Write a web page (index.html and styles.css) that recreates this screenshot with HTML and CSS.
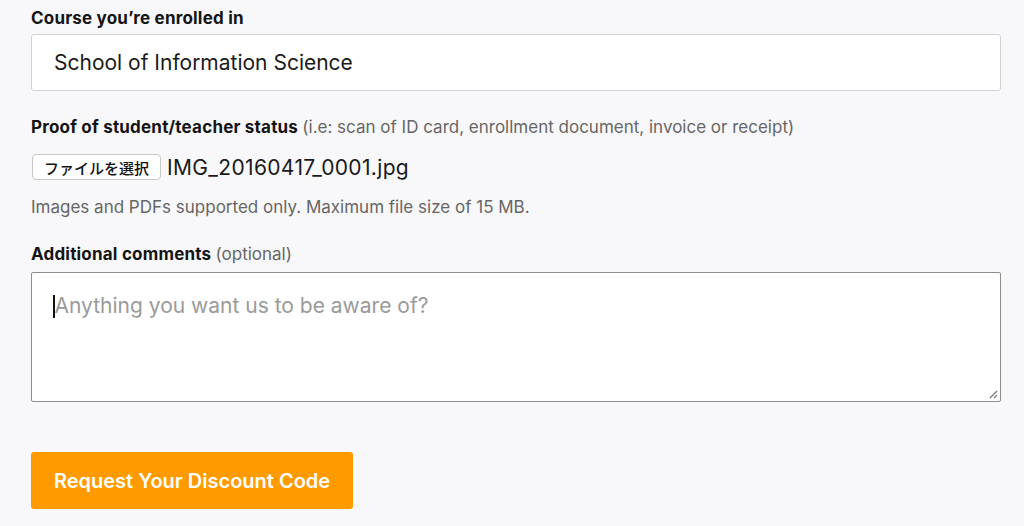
FILE: index.html
```html
<!DOCTYPE html>
<html>
<head>
<meta charset="utf-8">
<link rel="stylesheet" href="styles.css">
</head>
<body>
<form class="form">
  <div class="field">
    <label class="label">Course you’re enrolled in</label>
    <input class="input" type="text" value="School of Information Science">
  </div>
  <div class="field field-proof">
    <label class="label">Proof of student/teacher status <span class="muted">(i.e: scan of ID card, enrollment document, invoice or receipt)</span></label>
    <div class="file-row">
      <span class="file-btn">ファイルを選択</span>
      <span class="file-name">IMG_20160417_0001.jpg</span>
    </div>
    <p class="help">Images and PDFs supported only. Maximum file size of 15 MB.</p>
  </div>
  <div class="field">
    <label class="label">Additional comments <span class="muted">(optional)</span></label>
    <div class="textarea">
      <span class="caret"></span><span class="placeholder">Anything you want us to be aware of?</span>
      <svg class="grip" width="10" height="10" viewBox="0 0 10 10"><path d="M9 2 L2 9 M9 6 L6 9" stroke="#777" stroke-width="1.2" fill="none"/></svg>
    </div>
  </div>
  <div class="actions">
    <span class="submit">Request Your Discount Code</span>
  </div>
</form>
</body>
</html>
```
FILE: styles.css
```css
html, body {
  margin: 0;
  padding: 0;
  background: #f8f8fa;
  font-family: Inter, "Noto Sans", "Liberation Sans", sans-serif;
  color: #1a1a1a;
}
.form {
  width: 970px;
  padding: 8px 0 0 31px;
}
.field {
  display: flex;
  flex-direction: column;
}
.label {
  font-size: 17px;
  font-weight: 700;
  line-height: 20px;
  color: #141414;
  letter-spacing: 0.2px;
}
.muted {
  font-weight: 400;
  color: #666;
  letter-spacing: 0;
}
.input {
  margin-top: 6px;
  box-sizing: border-box;
  height: 57px;
  border: 1px solid #d2d2d4;
  border-radius: 3px;
  background: #fff;
  padding: 0 22px;
  font-family: inherit;
  font-size: 21px;
  color: #1a1a1a;
  outline: none;
}
.field-proof {
  margin-top: 26px;
}
.file-row {
  display: flex;
  align-items: center;
  margin-top: 17px;
  gap: 6px;
}
.file-btn {
  box-sizing: border-box;
  width: 129px;
  height: 26px;
  border: 1px solid #c8c8c8;
  border-radius: 4px;
  background: #fff;
  font-family: "Noto Sans CJK JP", sans-serif;
  font-size: 15px;
  font-weight: 500;
  display: flex;
  align-items: center;
  justify-content: center;
  color: #111;
  margin-left: 1px;
}
.file-name {
  font-size: 21px;
  letter-spacing: 0.35px;
  color: #1a1a1a;
}
.help {
  margin: 17px 0 0;
  font-size: 17px;
  line-height: 20px;
  color: #666;
}
.field-proof + .field {
  margin-top: 27px;
}
.textarea {
  position: relative;
  margin-top: 8px;
  box-sizing: border-box;
  height: 130px;
  border: 1px solid #8e8e8e;
  border-radius: 2px;
  background: #fff;
  padding: 20px 21px;
  font-size: 21px;
  line-height: 26px;
  display: flex;
  align-items: flex-start;
}
.caret {
  display: inline-block;
  width: 1.5px;
  height: 23px;
  margin-top: 2px;
  background: #111;
}
.placeholder {
  color: #9a9a9a;
}
.grip {
  position: absolute;
  right: 2px;
  bottom: 2px;
}
.actions {
  margin-top: 50px;
}
.submit {
  display: inline-flex;
  align-items: center;
  justify-content: center;
  width: 322px;
  height: 57px;
  background: #ff9a00;
  border-radius: 3px;
  color: #fff;
  font-size: 20px;
  font-weight: 600;
  letter-spacing: 0;
}
```
